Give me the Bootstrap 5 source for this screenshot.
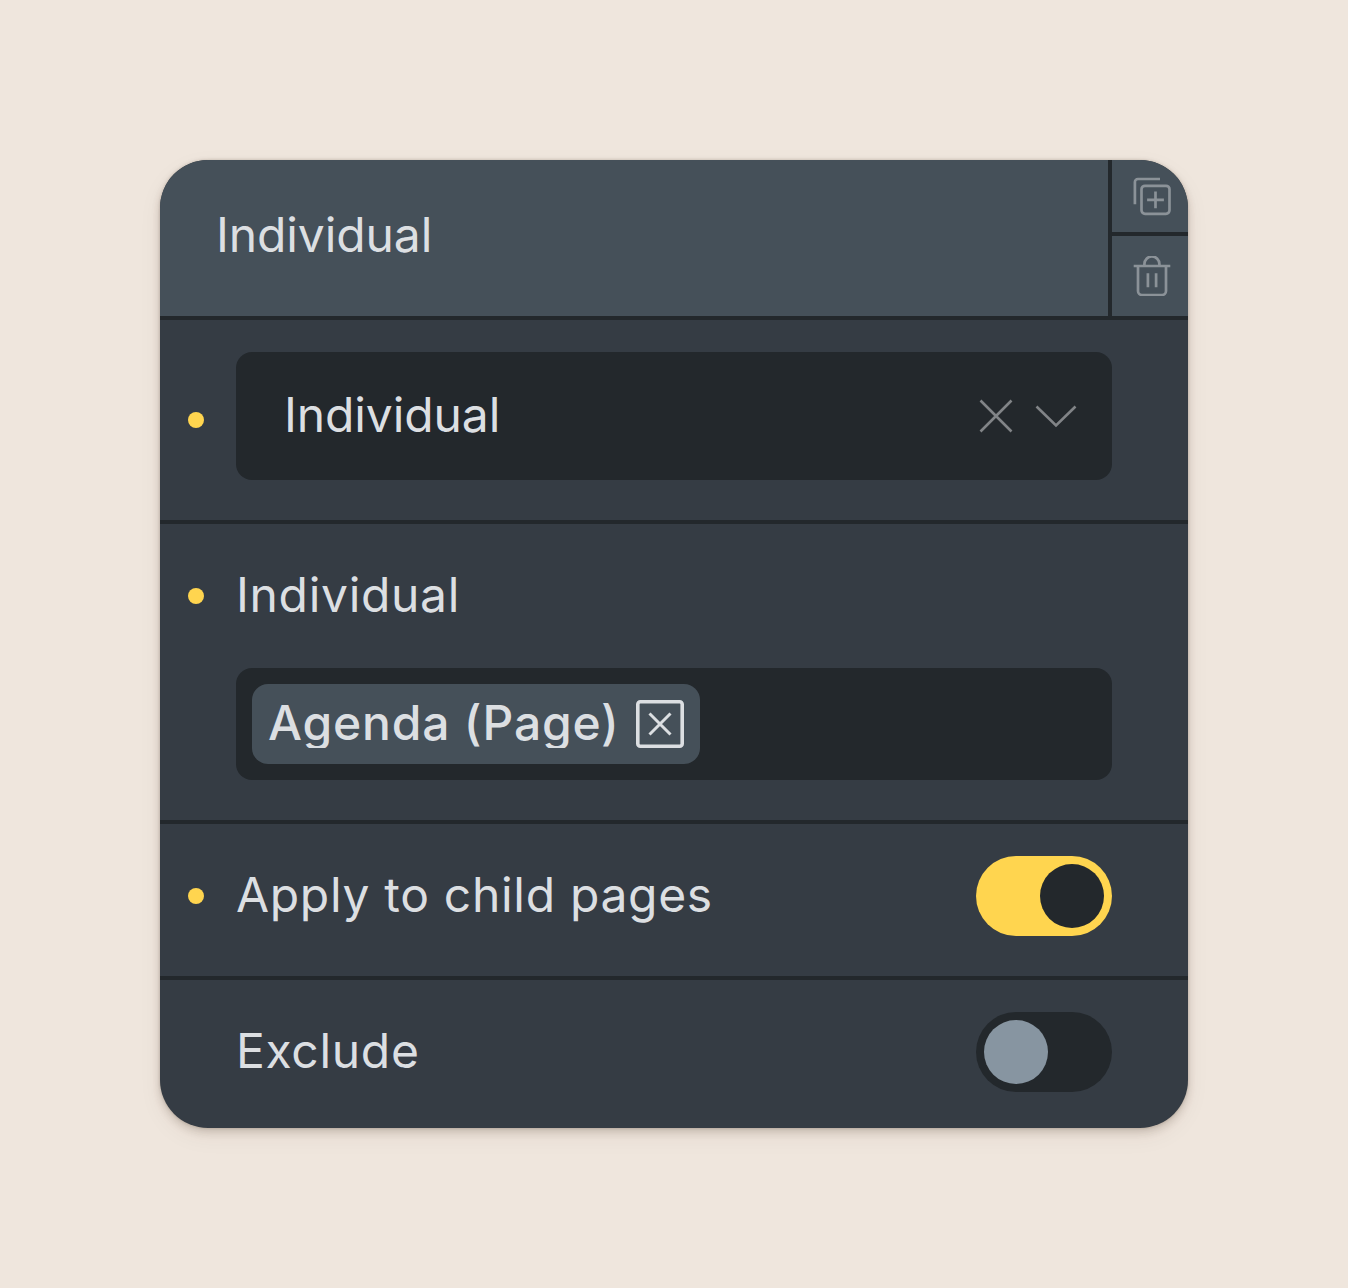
<!DOCTYPE html>
<html lang="en">
<head>
<meta charset="utf-8">
<meta name="viewport" content="width=device-width, initial-scale=1">
<title>Individual</title>
<link href="https://cdn.jsdelivr.net/npm/bootstrap@5.3.0/dist/css/bootstrap.min.css" rel="stylesheet">
<style>
  :root { --ink: #23282c; --panel: #353c44; --raised: #455059; --yellow: #ffd54f; }
  body { background: #efe6dd; font-family: Inter, "Liberation Sans", sans-serif; font-size: 48px; line-height: 64px; color: #dcdfe2; padding: 160px; }
  .panel { width: 1028px; height: 968px; border-radius: 48px; background: var(--panel); box-shadow: 0 4px 8px rgba(60,40,25,.2), 0 8px 24px rgba(60,40,25,.06), 0 0 3px rgba(60,40,25,.2); }
  .panel-head { height: 160px; background: var(--raised); border-bottom: 4px solid var(--ink); }
  .panel-title { padding: 43px 0 0 56px; letter-spacing: -.1px; }
  .head-tools { width: 80px; border-left: 4px solid var(--ink); }
  .tool { background: none; border: 0; padding: 0; color: #8b9298; }
  .tool-copy { height: 76px; border-bottom: 4px solid var(--ink); padding-left: 4px; }
  .tool-trash { height: 80px; padding-left: 4px; }
  .line { padding: 32px 76px 0 28px; border-bottom: 4px solid var(--ink); }
  .line:last-child { border-bottom: 0; }
  .line-select { height: 204px; }
  .line-pages { height: 300px; padding-top: 42px; }
  .line-apply { height: 156px; }
  .line-exclude { height: 148px; }
  .dot { width: 16px; height: 16px; margin-right: 32px; border-radius: 50%; background: var(--yellow); }
  .dot-off { background: transparent; }
  .dot-select { margin-top: 60px; }
  .field-label { letter-spacing: .68px; margin: -3px 0 -1px; }
  .field { background: var(--ink); border-radius: 16px; }
  .field-select { height: 128px; padding: 0 32px 2px 48px; letter-spacing: -.1px; }
  .field-select svg { color: #818487; position: relative; top: 1px; }
  .field-tags { width: 876px; height: 112px; margin: 42px 0 0 48px; padding: 16px; }
  .tag { width: 448px; height: 80px; padding: 0 16px; border-radius: 16px; background: var(--raised); font-weight: 500; }
  .tag-text { height: 48px; line-height: 45px; letter-spacing: .8px; overflow: hidden; }
  .switch { width: 136px; height: 80px; border-radius: 40px; padding: 8px; background: var(--ink); }
  .knob { width: 64px; height: 64px; border-radius: 50%; background: #8795a1; }
  .switch-on { background: var(--yellow); }
  .switch-on .knob { background: var(--ink); }
  svg { display: block; fill: none; stroke: currentColor; }
</style>
</head>
<body>
<main class="panel overflow-hidden">
  <header class="panel-head d-flex">
    <div class="panel-title flex-grow-1">Individual</div>
    <div class="head-tools d-flex flex-column">
      <button class="tool tool-copy d-flex align-items-center justify-content-center" aria-label="Duplicate">
        <svg width="40" height="40" viewBox="0 0 40 40" stroke-width="2.7"><rect x="9.5" y="9.8" width="28" height="28" rx="3.5"/><path d="M23.5 15.400v16.800M15.100 23.800h16.800M2.900 28.300V6a3 3 0 0 1 3-3H28"/></svg>
      </button>
      <button class="tool tool-trash d-flex align-items-center justify-content-center" aria-label="Delete">
        <svg width="40" height="40" viewBox="0 0 40 40" stroke-width="2.7"><path d="M1.7 10h36.6M6 10v25a4 4 0 0 0 4 4h20a4 4 0 0 0 4-4V10M12.400 10V8a7.200 7.200 0 0 1 15 0v2M15.900 17.300v14M24.100 17.300v14"/></svg>
      </button>
    </div>
  </header>

  <section class="line line-select d-flex align-items-start">
    <span class="dot dot-select flex-shrink-0"></span>
    <div class="field field-select d-flex align-items-center flex-grow-1">
      <span class="flex-grow-1">Individual</span>
      <svg width="104" height="40" viewBox="0 0 104 40" stroke-width="2.6" aria-hidden="true"><path d="M4.500 4.500l31 31M35.500 4.500l-31 31M60.500 10.500L80 29.500l19.500-19"/></svg>
    </div>
  </section>

  <section class="line line-pages">
    <div class="d-flex align-items-center">
      <span class="dot"></span>
      <span class="field-label">Individual</span>
    </div>
    <div class="field field-tags">
      <div class="tag d-flex align-items-center justify-content-between">
        <span class="tag-text">Agenda (Page)</span>
        <svg width="48" height="48" viewBox="0 0 48 48" stroke-width="3"><rect x="1.800" y="1.800" width="44.400" height="44.400" rx="2.500" stroke-width="3.600"/><path d="M13.500 13.500l21 21M34.500 13.500l-21 21"/></svg>
      </div>
    </div>
  </section>

  <section class="line line-apply">
    <div class="d-flex align-items-center">
      <span class="dot"></span>
      <span class="field-label flex-grow-1">Apply to child pages</span>
      <span class="switch switch-on d-flex justify-content-end" role="switch" aria-checked="true"><span class="knob"></span></span>
    </div>
  </section>

  <section class="line line-exclude">
    <div class="d-flex align-items-center">
      <span class="dot dot-off"></span>
      <span class="field-label flex-grow-1">Exclude</span>
      <span class="switch d-flex" role="switch" aria-checked="false"><span class="knob"></span></span>
    </div>
  </section>
</main>
<script src="https://cdn.jsdelivr.net/npm/bootstrap@5.3.0/dist/js/bootstrap.bundle.min.js"></script>
</body>
</html>
